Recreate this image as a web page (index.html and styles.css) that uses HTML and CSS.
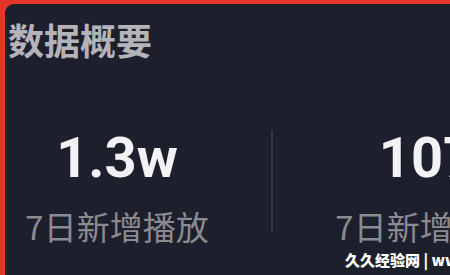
FILE: index.html
```html
<!DOCTYPE html>
<html lang="zh-CN">
<head>
<meta charset="utf-8">
<title>数据概要</title>
<link rel="stylesheet" href="styles.css">
</head>
<body>
<div class="frame">
  <section class="panel">
    <h1 class="title">数据概要</h1>
    <div class="stats">
      <div class="stat">
        <div class="value">1.3w</div>
        <div class="label">7日新增播放</div>
      </div>
      <div class="divider"></div>
      <div class="stat">
        <div class="value">107</div>
        <div class="label">7日新增粉丝</div>
      </div>
    </div>
  </section>
  <div class="watermark">久久经验网 | www.jiujiujingyan.com</div>
</div>
</body>
</html>
```

FILE: styles.css
```css
html, body {
  margin: 0;
  padding: 0;
  width: 450px;
  height: 275px;
  overflow: hidden;
  background: #e4352b;
}

.frame {
  position: relative;
  width: 450px;
  height: 275px;
  overflow: hidden;
  padding: 4px 0 0 5px;
  box-sizing: border-box;
}

.panel {
  width: 600px;
  height: 300px;
  background: #1e1f2c;
  border-top-left-radius: 9px;
  padding: 17px 0 0 3px;
  box-sizing: border-box;
  font-family: "Noto Sans CJK SC", "Noto Sans", sans-serif;
}

.title {
  margin: 0;
  font-size: 36px;
  line-height: 36px;
  font-weight: 700;
  color: #b3b3b9;
  letter-spacing: 0;
}

.stats {
  display: flex;
  gap: 42px;
  margin-top: 73px;
  margin-left: -3px;
}

.stat {
  width: 224px;
  display: flex;
  flex-direction: column;
  align-items: center;
  flex-shrink: 0;
}

.value {
  font-family: Roboto, "Liberation Sans", sans-serif;
  font-weight: 700;
  font-size: 56px;
  line-height: 56px;
  color: #f2f2f4;
}

.label {
  margin-top: 24px;
  font-size: 33px;
  line-height: 33px;
  color: #8a8a92;
  white-space: nowrap;
}

.divider {
  width: 2px;
  height: 102px;
  background: #353644;
  flex-shrink: 0;
  margin-top: 0;
}

.watermark {
  position: absolute;
  left: 345px;
  top: 250px;
  font-family: "Noto Sans CJK SC", sans-serif;
  font-weight: 900;
  font-size: 15px;
  line-height: 20px;
  color: #ffffff;
  white-space: nowrap;
}
```
